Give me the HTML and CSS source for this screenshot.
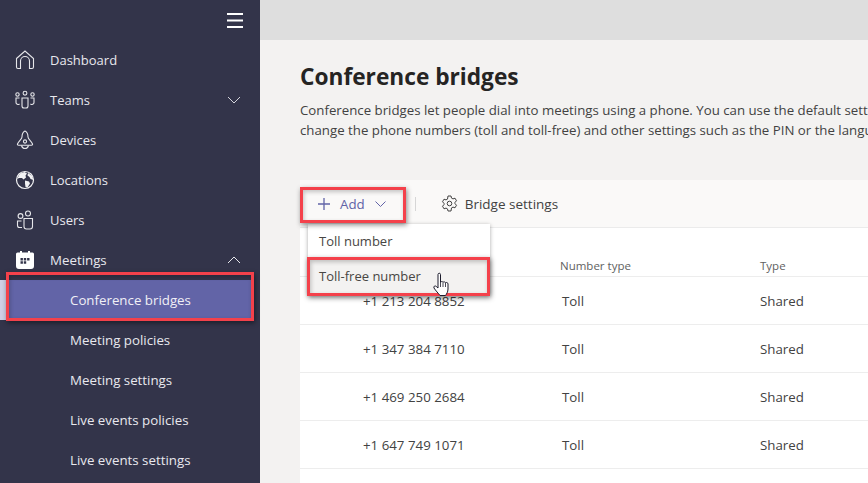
FILE: index.html
```html
<!DOCTYPE html>
<html lang="en">
<head>
<meta charset="utf-8">
<title>Conference bridges</title>
<link rel="stylesheet" href="styles.css">
</head>
<body>
<div class="page">
  <aside class="sidebar">
    <div class="side-top">
      <svg class="burger" width="16" height="15" viewBox="0 0 16 15"><path d="M0 1h16M0 7.5h16M0 14h16" stroke="#fff" stroke-width="2"/></svg>
    </div>
    <nav class="nav">
      <a class="nav-item">
        <svg class="nav-icon" width="20" height="20" viewBox="0 0 20 20" fill="none" stroke="#e6e6ea" stroke-width="1.1"><path d="M1.5 8.5 10 1l8.500 7.500V17a1.500 1.500 0 0 1-1.500 1.500h-2.500V11a4.500 4.500 0 0 0-9 0v7.500H3A1.500 1.500 0 0 1 1.500 17z"/></svg>
        <span>Dashboard</span>
      </a>
      <a class="nav-item">
        <svg class="nav-icon" width="20" height="20" viewBox="0 0 20 20" fill="none" stroke="#e6e6ea" stroke-width="1.100"><circle cx="2.500" cy="4.500" r="1.700"/><circle cx="10" cy="3.200" r="1.900"/><circle cx="17.500" cy="4.500" r="1.700"/><path d="M7 8h6v8a2 2 0 0 1-2 2H9a2 2 0 0 1-2-2zM4.500 8H1v4.500a2 2 0 0 0 3.500 1.300M15.500 8H19v4.500a2 2 0 0 1-3.500 1.300"/></svg>
        <span>Teams</span>
        <svg class="chev" width="14" height="8" viewBox="0 0 14 8" fill="none" stroke="#d5d5dc" stroke-width="1"><path d="M1 1l6 6 6-6"/></svg>
      </a>
      <a class="nav-item">
        <svg class="nav-icon" width="20" height="20" viewBox="0 0 20 20" fill="none" stroke="#e6e6ea" stroke-width="1.100"><path d="M10 1c2 1 3 3.500 3 6 0 2 3.500 4.500 4.500 7 .3.800-.2 1.200-1 1.200H3.500c-.8 0-1.300-.4-1-1.200C3.500 11.500 7 9 7 7c0-2.500 1-5 3-6z"/><circle cx="10" cy="11.500" r="1.600"/><path d="M6.500 15.500c.5 2 2 3 3.500 3s3-1 3.500-3"/></svg>
        <span>Devices</span>
      </a>
      <a class="nav-item">
        <svg class="nav-icon" width="20" height="20" viewBox="0 0 20 20"><circle cx="10" cy="10" r="8.500" fill="none" stroke="#f2f2f4" stroke-width="1.200"/><path fill="#f2f2f4" d="M5 3.500 9.500 2 12 3.500 10.500 5.500 11 7.500 8.500 9.500 7 8 4 8 2 9zM10 10.500l4 1 1 2-2.500 4-2-.5-.5-3.500zM13 3l4 3 1.500 4-3-1-1-2-2-1.500z"/></svg>
        <span>Locations</span>
      </a>
      <a class="nav-item">
        <svg class="nav-icon" width="20" height="20" viewBox="0 0 20 20" fill="none" stroke="#e6e6ea" stroke-width="1.100"><circle cx="5.500" cy="6" r="2.400"/><circle cx="13" cy="3.500" r="2.500"/><path d="M9 8.500h8.500v8a2.500 2.500 0 0 1-2.500 2.500h-3.500A2.500 2.500 0 0 1 9 16.500zM6.500 11H2.500v4.500a2 2 0 0 0 2 2H7"/></svg>
        <span>Users</span>
      </a>
      <a class="nav-item">
        <svg class="nav-icon" width="20" height="20" viewBox="0 0 20 20"><path fill="#fff" d="M2.500 2.500H5V1h2v1.500h6V1h2v1.500h2.500A1.500 1.500 0 0 1 19 4v12a3 3 0 0 1-3 3H4a3 3 0 0 1-3-3V4a1.500 1.500 0 0 1 1.500-1.500z"/><path fill="#33344a" d="M5.500 8h2.400v2.400H5.500zM8.800 8h2.400v2.400H8.800zM12.100 8h2.400v2.400h-2.400zM5.500 11.300h2.400v2.400H5.500zM8.800 11.300h2.400v2.400H8.800z"/></svg>
        <span class="nav-wide">Meetings</span>
        <svg class="chev" width="14" height="8" viewBox="0 0 14 8" fill="none" stroke="#e6e6ea" stroke-width="1"><path d="M1 7l6-6 6 6"/></svg>
      </a>
      <a class="nav-sub nav-sub-active">Conference bridges</a>
      <a class="nav-sub">Meeting policies</a>
      <a class="nav-sub">Meeting settings</a>
      <a class="nav-sub">Live events policies</a>
      <a class="nav-sub">Live events settings</a>
    </nav>
  </aside>

  <main class="main">
    <div class="topbar"></div>
    <section class="content">
      <h1 class="title">Conference bridges</h1>
      <p class="intro">Conference bridges let people dial into meetings using a phone. You can use the default settings for the conference bridges or you can<br>change the phone numbers (toll and toll-free) and other settings such as the PIN or the language that is used for the conference bridge.</p>
      <div class="card">
        <div class="toolbar">
          <button class="tool tool-add">
            <svg width="12" height="12" viewBox="0 0 12 12" fill="none" stroke="#6264a7" stroke-width="1.300"><path d="M6 0v12M0 6h12"/></svg>
            <span>Add</span>
            <svg class="tool-chev" width="11" height="6" viewBox="0 0 11 6" fill="none" stroke="#6264a7" stroke-width="1"><path d="M.5.500l5 5 5-5"/></svg>
          </button>
          <span class="tool-sep"></span>
          <button class="tool tool-settings">
            <svg width="17" height="17" viewBox="0 0 17 17" fill="none" stroke="#424242" stroke-width="1"><circle cx="8.500" cy="8.500" r="2.300"/><path d="M7 1h3l.5 2.100 1.500.8 2-.7 1.500 2.600-1.500 1.500v1.400l1.500 1.500-1.500 2.600-2-.7-1.500.8L10 16H7l-.5-2.100-1.500-.8-2 .7-1.500-2.600L3 9.700V8.300L1.500 6.800 3 4.200l2 .7 1.500-.8z"/></svg>
            <span>Bridge settings</span>
          </button>
        </div>
        <div class="table">
          <div class="row row-head">
            <span class="col-num"></span>
            <span class="col-kind head-kind">Number type</span>
            <span class="col-type">Type</span>
          </div>
          <div class="row"><span class="col-num">+1 213 204 8852</span><span class="col-kind">Toll</span><span class="col-type">Shared</span></div>
          <div class="row"><span class="col-num">+1 347 384 7110</span><span class="col-kind">Toll</span><span class="col-type">Shared</span></div>
          <div class="row"><span class="col-num">+1 469 250 2684</span><span class="col-kind">Toll</span><span class="col-type">Shared</span></div>
          <div class="row"><span class="col-num">+1 647 749 1071</span><span class="col-kind">Toll</span><span class="col-type">Shared</span></div>
        </div>
      </div>
    </section>
  </main>

  <div class="menu">
    <div class="menu-item">Toll number</div>
    <div class="menu-item menu-item-hover">Toll-free number</div>
  </div>

  <div class="mark mark-side"></div>
  <div class="mark mark-add"></div>
  <div class="mark mark-free"></div>

  <svg class="cursor" width="20" height="26" viewBox="0 0 20 26"><path fill="#fff" stroke="#1a1a2a" stroke-width="1" stroke-linejoin="round" d="M5 2.500C5 .8 7.500.8 7.500 2.500V10c1-.6 2-.5 2.500.2.900-.5 2-.4 2.500.4 1-.4 2.500 0 2.500 1.400V17c0 3-1.500 5-2.500 6.500H7C5.500 21.500 2.500 18.500 1 16c-.8-1.500 1-2.800 2.200-1.600L5 16z"/><path stroke="#1a1a2a" stroke-width=".8" d="M7.500 10v5M10 10.500V15M12.500 11v4"/></svg>
</div>
</body>
</html>
```

FILE: styles.css
```css
* { box-sizing: border-box; }
html, body { margin: 0; padding: 0; }
body {
  font-family: "Open Sans", "Noto Sans", "Liberation Sans", sans-serif;
  font-size: 13px;
  color: #424242;
}
.page {
  position: relative;
  width: 868px;
  height: 483px;
  overflow: hidden;
  display: flex;
  background: #f3f2f1;
}
.sidebar {
  flex: 0 0 260px;
  background: #33344a;
  color: #e8e8ee;
}
.side-top {
  height: 40px;
  display: flex;
  justify-content: flex-end;
  align-items: flex-start;
  padding: 13px 17px 0 0;
}
.burger { display: block; }
.nav-item, .nav-sub {
  display: flex;
  align-items: center;
  height: 40px;
}
.nav-item { padding: 0 19px 0 15px; }
.nav-icon { flex: none; margin-right: 15px; }
.nav-wide { font-size: 13.300px; }
.chev { margin-left: auto; }
.nav-sub { padding-left: 70px; font-size: 13.300px; }
.nav-sub-active {
  background: #6264a7;
  color: #f0f0f6;
  margin-right: 9px;
  box-shadow: -8px 0 0 #cfcfe6;
  margin-left: 8px;
  padding-left: 62px;
}
.main {
  flex: 1;
  min-width: 0;
  display: flex;
  flex-direction: column;
}
.topbar {
  flex: 0 0 40px;
  background: #dedede;
}
.content {
  flex: 1;
  padding: 19px 0 0 40px;
  min-width: 0;
}
.title {
  margin: 0;
  font-size: 22.700px;
  line-height: 36px;
  font-weight: 700;
  color: #252423;
  white-space: nowrap;
}
.intro {
  margin: 5px 0 0;
  line-height: 20px;
  font-size: 13.250px;
  white-space: nowrap;
  color: #424242;
}
.card {
  margin-top: 40px;
  width: 700px;
  height: 320px;
  background: #fff;
}
.toolbar {
  display: flex;
  align-items: center;
  height: 48px;
  padding-left: 18px;
  background: #faf9f8;
  border-bottom: 1px solid #ebebeb;
}
.tool {
  display: flex;
  align-items: center;
  padding: 0;
  border: 0;
  background: none;
  font: inherit;
  font-size: 13.300px;
  color: #424242;
}
.tool-add { color: #6264a7; gap: 10px; }
.tool-chev { margin-left: 0; }
.tool-sep {
  width: 1px;
  height: 14px;
  margin: 0 25px 0 29px;
  background: #d6d6d6;
}
.tool-settings { gap: 7px; font-size: 13.500px; }
.table { padding-top: 25px; font-size: 13.300px; }
.row {
  display: flex;
  align-items: center;
  height: 48px;
  border-bottom: 1px solid #ededed;
}
.row-head {
  height: 24px;
  padding-top: 2px;
  font-size: 11.500px;
  color: #616161;
}
.col-num { flex: 0 0 262px; padding-left: 63px; }
.col-kind { flex: 0 0 198px; }
.head-kind { margin-left: -2px; flex-basis: 200px; }
.col-type { flex: 0 0 auto; }
.menu {
  position: absolute;
  left: 308px;
  top: 224px;
  width: 182px;
  height: 70px;
  background: #fff;
  box-shadow: 0 1px 4px rgba(0,0,0,.35);
}
.menu-item {
  height: 34px;
  padding-left: 11px;
  display: flex;
  align-items: center;
  color: #484644;
}
.menu-item-hover {
  height: 36px;
  background: #f3f2f1;
}
.mark {
  position: absolute;
  border: 3px solid #f4414b;
  box-shadow: 1px 2px 5px rgba(0,0,0,.45), inset 1px 2px 4px rgba(0,0,0,.22);
}
.mark-side { left: 6px; top: 272px; width: 248px; height: 49px; }
.mark-add { left: 300px; top: 187px; width: 106px; height: 36px; }
.mark-free { left: 307px; top: 257px; width: 183px; height: 39px; }
.cursor { position: absolute; left: 433px; top: 272px; }
```
